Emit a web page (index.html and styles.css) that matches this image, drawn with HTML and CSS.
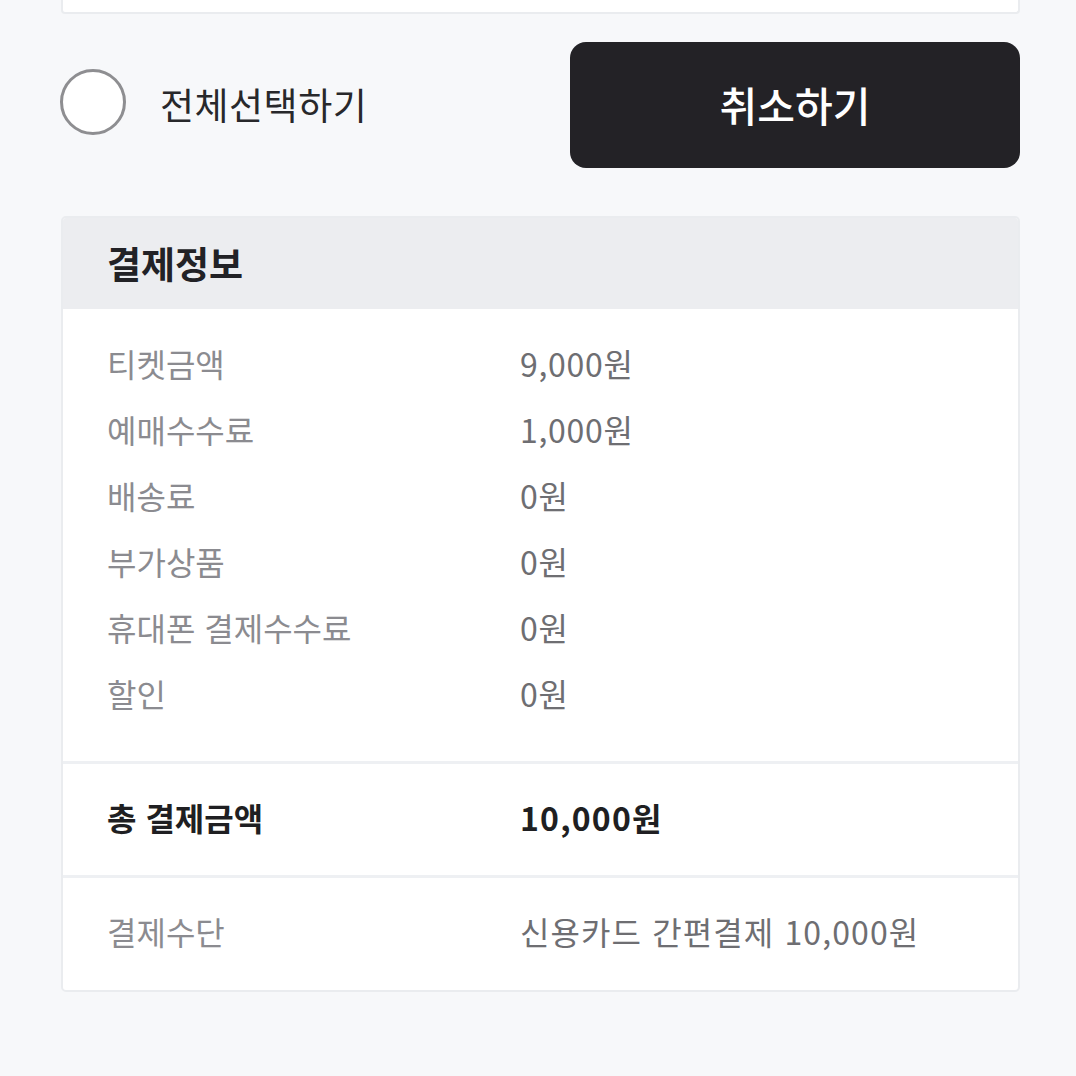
FILE: index.html
```html
<!DOCTYPE html>
<html lang="ko">
<head>
<meta charset="utf-8">
<link rel="stylesheet" href="styles.css">
</head>
<body>
<div class="top-card"></div>
<div class="actions">
  <label class="select-all">
    <span class="radio"></span>
    <span class="select-text">전체선택하기</span>
  </label>
  <button class="cancel-btn">취소하기</button>
</div>
<section class="card">
  <div class="card-head">결제정보</div>
  <div class="section detail">
    <div class="row"><span class="label">티켓금액</span><span class="value">9,000원</span></div>
    <div class="row"><span class="label">예매수수료</span><span class="value">1,000원</span></div>
    <div class="row"><span class="label">배송료</span><span class="value">0원</span></div>
    <div class="row"><span class="label">부가상품</span><span class="value">0원</span></div>
    <div class="row"><span class="label">휴대폰 결제수수료</span><span class="value">0원</span></div>
    <div class="row"><span class="label">할인</span><span class="value">0원</span></div>
  </div>
  <div class="section total">
    <div class="row"><span class="label">총 결제금액</span><span class="value">10,000원</span></div>
  </div>
  <div class="section method">
    <div class="row"><span class="label">결제수단</span><span class="value">신용카드 간편결제 10,000원</span></div>
  </div>
</section>
</body>
</html>
```

FILE: styles.css
```css
html, body {
  margin: 0;
  padding: 0;
  background: #f7f8fa;
  font-family: "Noto Sans CJK KR", "Noto Sans", sans-serif;
}

.top-card {
  height: 12px;
  margin: 0 56px 0 61px;
  background: #fff;
  border: 2px solid #eaecef;
  border-top: none;
  border-radius: 0 0 4px 4px;
}

.actions {
  display: flex;
  align-items: center;
  justify-content: space-between;
  margin: 28px 56px 0 60px;
}

.select-all {
  display: flex;
  align-items: center;
  gap: 34px;
}

.radio {
  width: 60px;
  height: 60px;
  margin-bottom: 6px;
  border: 3px solid #8e8e91;
  border-radius: 50%;
  background: #fff;
}

.select-text {
  font-size: 37px;
  color: #28282b;
  margin-bottom: 2px;
  letter-spacing: 0.5px;
}

.cancel-btn {
  width: 450px;
  height: 126px;
  border: none;
  border-radius: 16px;
  background: #232226;
  color: #fff;
  font-family: inherit;
  font-size: 41px;
  font-weight: 500;
  padding-bottom: 4px;
}

.card {
  margin: 48px 56px 0 61px;
  background: #fff;
  border: 2px solid #eaecef;
  border-radius: 5px;
  overflow: hidden;
}

.card-head {
  height: 91px;
  line-height: 91px;
  padding-left: 44px;
  background: #ecedf0;
  font-size: 37px;
  font-weight: 700;
  color: #222226;
}

.section {
  padding: 0 44px;
}

.section + .section {
  border-top: 3px solid #eef0f3;
}

.detail {
  padding-top: 21px;
  padding-bottom: 35px;
}

.row {
  display: flex;
  height: 66px;
  align-items: center;
  font-size: 32px;
}

.label {
  width: 413px;
  color: #8b8b90;
}

.value {
  color: #6e6e72;
  letter-spacing: 0.7px;
}

.total {
  height: 111px;
  display: flex;
  align-items: center;
}

.total .row,
.method .row {
  margin-top: -6px;
}

.total .label,
.total .value {
  color: #1f1f22;
  font-weight: 700;
}

.total .value {
  letter-spacing: 1.2px;
}

.method {
  height: 112px;
  display: flex;
  align-items: center;
}

.method .value {
  letter-spacing: 1.1px;
}
```
